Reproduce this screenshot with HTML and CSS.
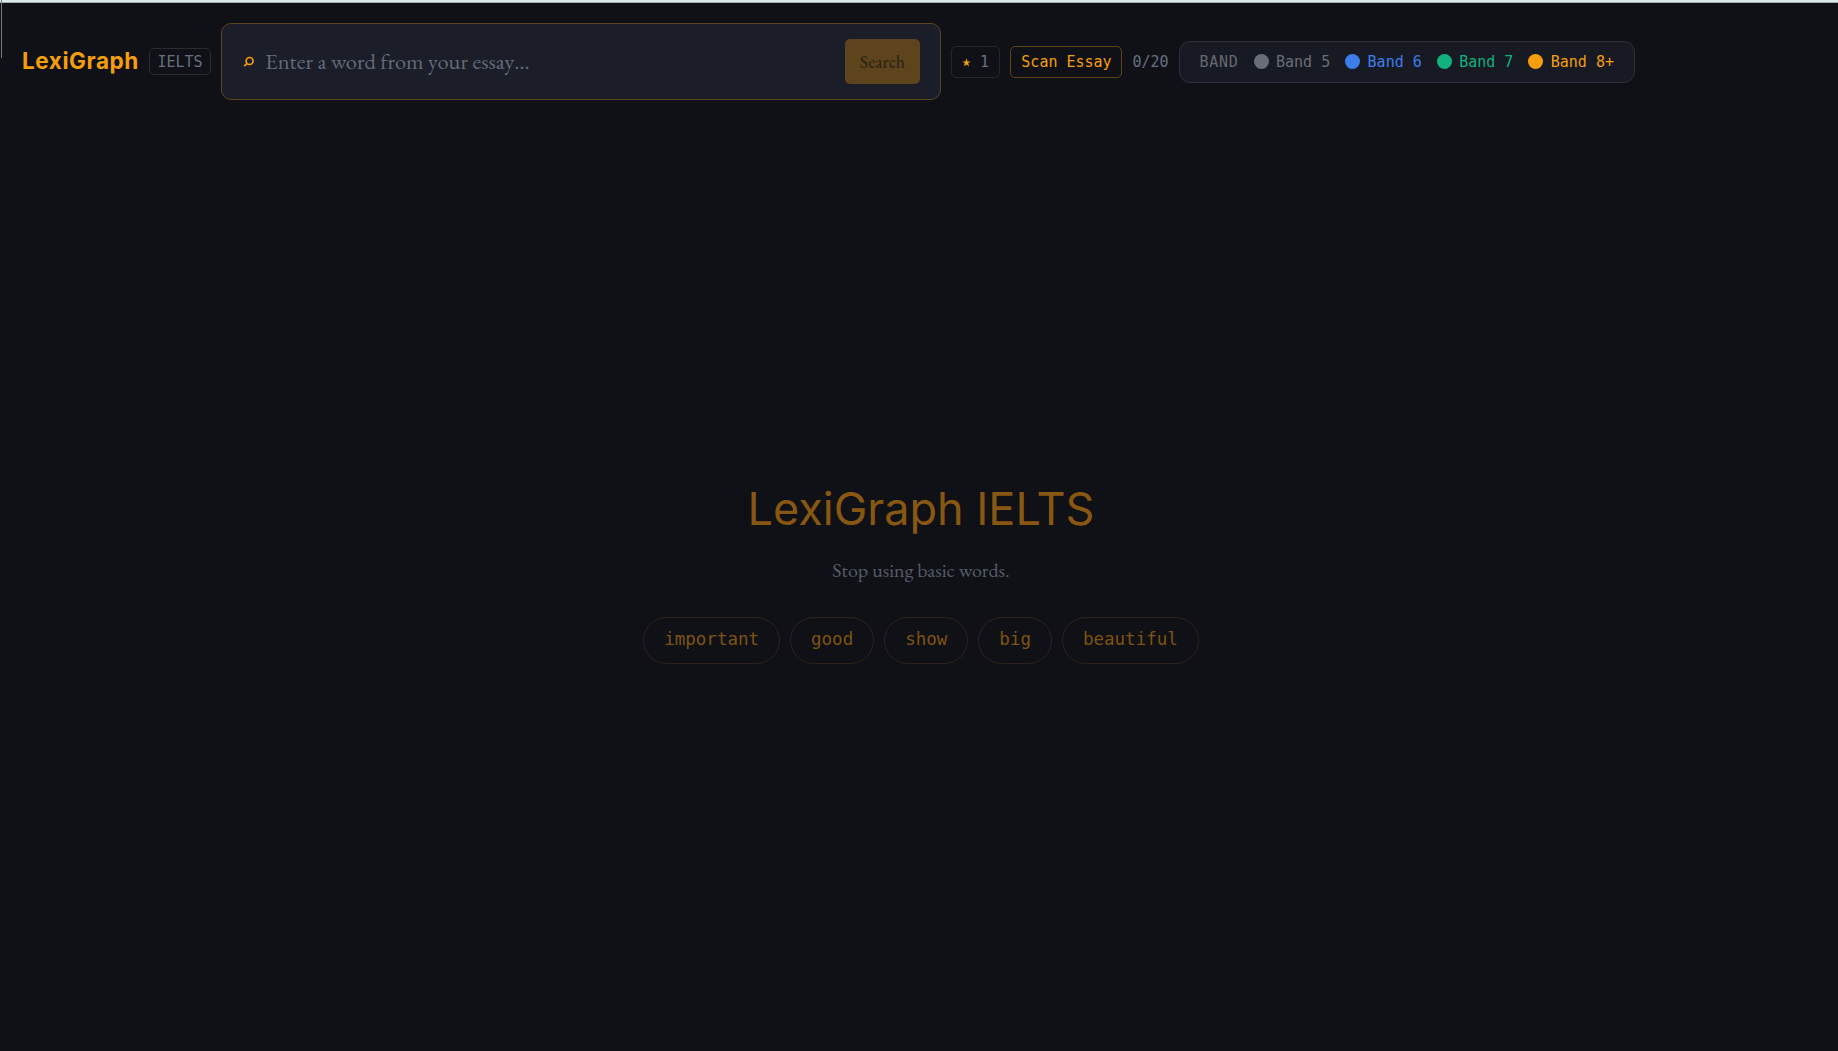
FILE: index.html
```html
<!DOCTYPE html>
<html lang="en">
<head>
    <meta charset="UTF-8">
    <meta name="viewport" content="width=device-width, initial-scale=1.0">
    <title>LexiGraph IELTS</title>
    <link rel="stylesheet" href="styles.css">
</head>
<body>
    <div class="edge"></div>
    <header class="topbar">
        <div class="logo">LexiGraph</div>
        <span class="tag">IELTS</span>
        <form class="search-box" onsubmit="return false">
            <svg class="search-icon" viewBox="0 0 12 12" width="12" height="12">
                <circle cx="6.6" cy="5" r="3.5"/>
                <path d="M4.2 7.4 1.2 10.2"/>
            </svg>
            <input class="search-input" type="text" placeholder="Enter a word from your essay…">
            <button class="search-button" disabled>Search</button>
        </form>
        <button class="saved-button"><svg class="star" viewBox="0 0 10 10" width="9" height="9"><path d="M5 .4 6.1 3.8H9.7L6.8 5.9 7.9 9.4 5 7.3 2.1 9.4 3.2 5.9.3 3.8H3.9Z"/></svg>1</button>
        <button class="scan-button">Scan Essay</button>
        <span class="counter">0/20</span>
        <div class="legend">
            <span class="legend-title">BAND</span>
            <span class="band band-5"><i class="dot"></i>Band 5</span>
            <span class="band band-6"><i class="dot"></i>Band 6</span>
            <span class="band band-7"><i class="dot"></i>Band 7</span>
            <span class="band band-8"><i class="dot"></i>Band 8+</span>
        </div>
    </header>
    <main class="hero">
        <h1 class="hero-title">LexiGraph IELTS</h1>
        <p class="hero-text">Stop using basic words.</p>
        <div class="chips">
            <button class="chip">important</button>
            <button class="chip">good</button>
            <button class="chip">show</button>
            <button class="chip">big</button>
            <button class="chip">beautiful</button>
        </div>
    </main>
</body>
</html>
```
FILE: styles.css
```css
* {
    box-sizing: border-box;
}

body {
    margin: 0;
    height: 100vh;
    overflow: hidden;
    display: flex;
    flex-direction: column;
    background: #101116;
    border-top: 2px solid #dbe8ec;
    box-shadow: inset 0 1px 0 #a5abb0;
    color: #667080;
    font-family: "DejaVu Sans Mono", monospace;
    font-size: 15px;
}

button {
    font: inherit;
    color: inherit;
    background: none;
    padding: 0;
}

.edge {
    position: absolute;
    top: 0;
    left: 1px;
    width: 1px;
    height: 58px;
    background: #77787c;
}

.topbar {
    display: flex;
    align-items: center;
    gap: 10px;
    height: 119px;
    padding: 0 22px;
    flex-shrink: 0;
}

.logo {
    width: 117px;
    padding-bottom: 2px;
    font-family: Inter, sans-serif;
    font-size: 22.5px;
    font-weight: 700;
    letter-spacing: 0.56px;
    color: #f59e0b;
    white-space: nowrap;
}

.tag {
    width: 62px;
    height: 27px;
    line-height: 27px;
    text-align: center;
    border: 1px solid #2b2b32;
    border-radius: 5px;
}

.search-box {
    display: flex;
    align-items: center;
    width: 720px;
    height: 77px;
    margin: 0;
    padding: 0 20px 0 21px;
    background: #1b1d28;
    border: 1px solid #5d441d;
    border-radius: 10px;
}

.search-icon {
    fill: none;
    stroke: #f59e0b;
    stroke-width: 1.7;
}

.search-input {
    flex: 1;
    min-width: 0;
    margin-left: 10px;
    padding: 0 0 2px;
    border: none;
    outline: none;
    background: transparent;
    font-family: "EB Garamond", "Liberation Serif", serif;
    font-size: 22.5px;
    color: #e5e7eb;
}

.search-input::placeholder {
    color: #626b79;
    opacity: 1;
}

.search-button {
    width: 75px;
    height: 45px;
    padding-bottom: 1px;
    border: none;
    border-radius: 5px;
    background: #5e441d;
    color: #2f2514;
    font-family: "EB Garamond", "Liberation Serif", serif;
    font-size: 17.5px;
    font-weight: 500;
}

.saved-button {
    display: flex;
    align-items: center;
    justify-content: center;
    gap: 9px;
    width: 49px;
    height: 32px;
    border: 1px solid #25272f;
    border-radius: 5px;
}

.star {
    margin-top: 2px;
    fill: #f59e0b;
}

.scan-button {
    width: 112px;
    height: 32px;
    padding-left: 1px;
    border: 1px solid #5d4216;
    border-radius: 5px;
    color: #f59e0b;
}

.counter {
    width: 37px;
    padding-left: 0.5px;
}

.legend {
    display: flex;
    align-items: center;
    gap: 15px;
    width: 456px;
    height: 42px;
    padding-left: 19.5px;
    background: #181a23;
    border: 1px solid #2e2f38;
    border-radius: 11px;
    white-space: nowrap;
}

.legend-title {
    letter-spacing: 0.75px;
    color: #646972;
}

.band {
    display: flex;
    align-items: center;
    gap: 7.4px;
}

.dot {
    width: 15px;
    height: 15px;
    border-radius: 50%;
    background: currentColor;
}

.band-5 { color: #696e76; }
.band-6 { color: #3b7eeb; }
.band-7 { color: #11b27e; }
.band-8 { color: #f59e0b; }

.hero {
    display: flex;
    flex-direction: column;
    align-items: center;
    padding: 360px 0 0 4px;
}

.hero-title {
    margin: 0;
    font-family: Inter, sans-serif;
    font-size: 45px;
    font-weight: 400;
    line-height: 56px;
    color: #885812;
}

.hero-text {
    margin: 21px 0 0;
    font-family: "EB Garamond", "Liberation Serif", serif;
    font-size: 20px;
    line-height: 24px;
    color: #565d69;
}

.chips {
    display: flex;
    gap: 10px;
    margin-top: 35px;
}

.chip {
    height: 47px;
    padding: 0 20px 4px;
    border: 1px solid #2d2318;
    border-radius: 24px;
    font-size: 17.5px;
    color: #7e5312;
}
```
